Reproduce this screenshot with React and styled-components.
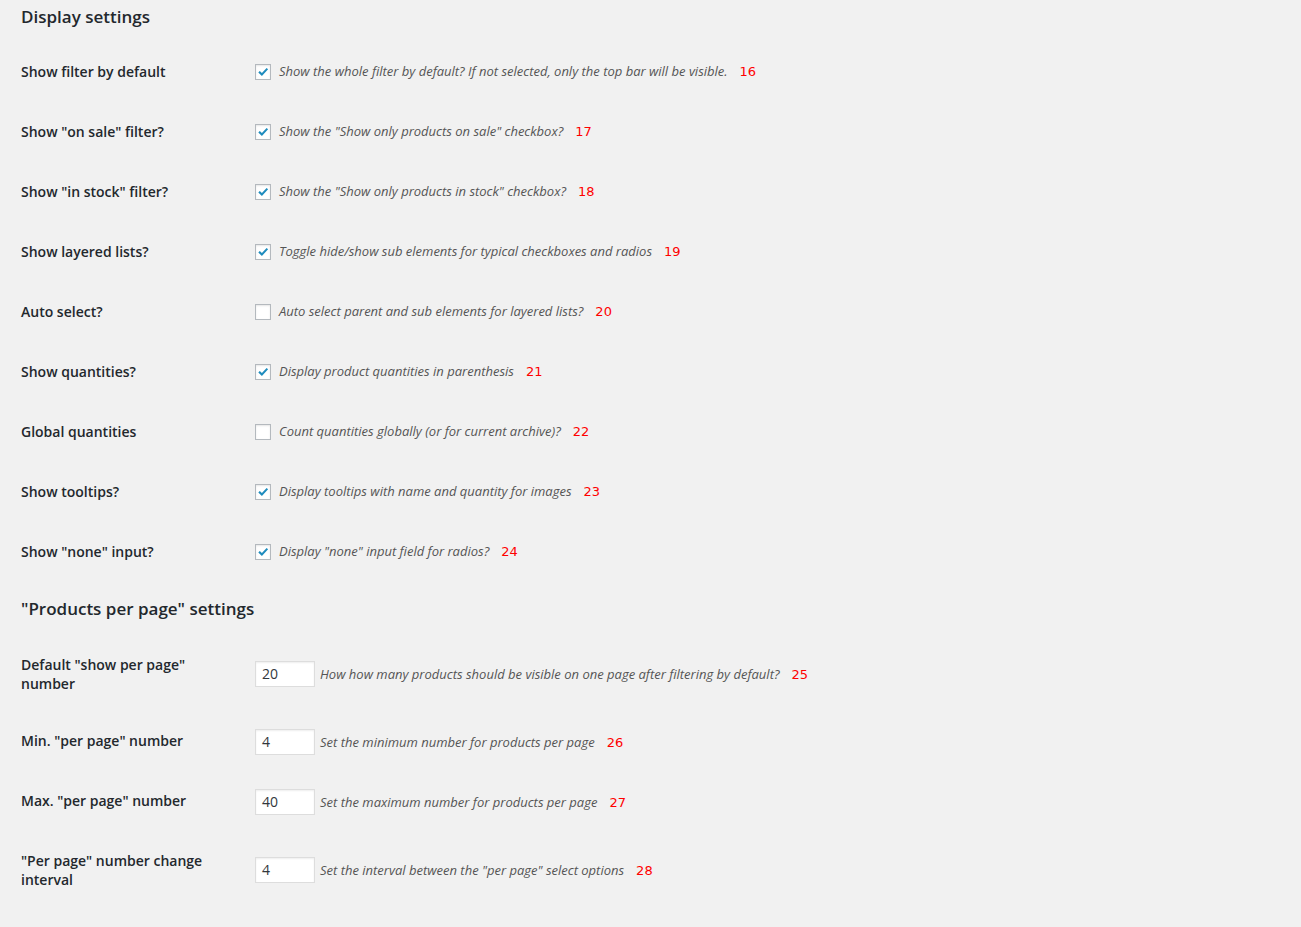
import React from "react";
import styled, { createGlobalStyle } from "styled-components";

const Global = createGlobalStyle`
  html, body { margin: 0; padding: 0; background: #f1f1f1; }
  body { font-family: "Open Sans", "Noto Sans", sans-serif; color: #23282d; }
`;

const Page = styled.div`
  padding: 0 21px;
  min-height: 927px;
  box-sizing: border-box;
  background: #f1f1f1;
`;

const Heading = styled.h2`
  margin: ${(p) => (p.$first ? "5px 0 14px" : "14px 0 15px")};
  font-size: 17px;
  line-height: 24px;
  font-weight: 600;
  color: #23282d;
`;

const Row = styled.div`
  display: grid;
  grid-template-columns: 234px 1fr;
  align-items: center;
  min-height: 60px;
`;

const Label = styled.div`
  align-self: start;
  padding: 19px 0;
  width: 185px;
  font-size: 14px;
  line-height: 19px;
  font-weight: 600;
  color: #23282d;
`;

const Field = styled.div`
  display: flex;
  align-items: center;
  gap: ${(p) => (p.$input ? 5 : 8)}px;
  padding-bottom: ${(p) => (p.$input ? 0 : 3)}px;
`;

const Box = styled.span`
  width: 16px;
  height: 16px;
  box-sizing: border-box;
  border: 1px solid #b4b9be;
  background: #fff;
  box-shadow: inset 0 1px 2px rgba(0, 0, 0, 0.1);
  display: inline-flex;
  align-items: center;
  justify-content: center;
  flex: none;
`;

const Input = styled.div`
  width: 60px;
  height: 26px;
  box-sizing: border-box;
  border: 1px solid #ddd;
  background: #fff;
  box-shadow: inset 0 1px 2px rgba(0, 0, 0, 0.07);
  font-size: 14px;
  line-height: 24px;
  padding-left: 6px;
  color: #32373c;
  flex: none;
`;

const Text = styled.div`
  display: flex;
  align-items: baseline;
  gap: 12px;
`;

const Desc = styled.span`
  font-size: 13px;
  font-style: italic;
  color: #555;
  line-height: 18px;
`;

const Num = styled.span`
  font-family: "DejaVu Sans", "Liberation Sans", sans-serif;
  font-size: 13px;
  color: #ff0000;
  line-height: 18px;
`;

const Check = () => (
  <svg width="14" height="14" viewBox="0 0 14 14">
    <path
      d="M2.3 7.4 L3.8 5.9 L5.9 8.0 L10.6 2.9 L12.1 4.3 L5.9 10.9 Z"
      fill="#1e8cbe"
    />
  </svg>
);

const display = [
  ["Show filter by default", true, "Show the whole filter by default? If not selected, only the top bar will be visible.", 16],
  ['Show "on sale" filter?', true, 'Show the "Show only products on sale" checkbox?', 17],
  ['Show "in stock" filter?', true, 'Show the "Show only products in stock" checkbox?', 18],
  ["Show layered lists?", true, "Toggle hide/show sub elements for typical checkboxes and radios", 19],
  ["Auto select?", false, "Auto select parent and sub elements for layered lists?", 20],
  ["Show quantities?", true, "Display product quantities in parenthesis", 21],
  ["Global quantities", false, "Count quantities globally (or for current archive)?", 22],
  ["Show tooltips?", true, "Display tooltips with name and quantity for images", 23],
  ['Show "none" input?', true, 'Display "none" input field for radios?', 24],
];

const perPage = [
  ['Default "show per page" number', "20", "How how many products should be visible on one page after filtering by default?", 25],
  ['Min. "per page" number', "4", "Set the minimum number for products per page", 26],
  ['Max. "per page" number', "40", "Set the maximum number for products per page", 27],
  ['"Per page" number change interval', "4", 'Set the interval between the "per page" select options', 28],
];

export default function App() {
  return (
    <Page>
      <Global />
      <Heading $first>Display settings</Heading>
      {display.map(([label, checked, desc, n]) => (
        <Row key={n}>
          <Label>{label}</Label>
          <Field>
            <Box>{checked && <Check />}</Box>
            <Text>
              <Desc>{desc}</Desc>
              <Num>{n}</Num>
            </Text>
          </Field>
        </Row>
      ))}
      <Heading>"Products per page" settings</Heading>
      {perPage.map(([label, val, desc, n]) => (
        <Row key={n}>
          <Label>{label}</Label>
          <Field $input>
            <Input>{val}</Input>
            <Text>
              <Desc>{desc}</Desc>
              <Num>{n}</Num>
            </Text>
          </Field>
        </Row>
      ))}
    </Page>
  );
}
